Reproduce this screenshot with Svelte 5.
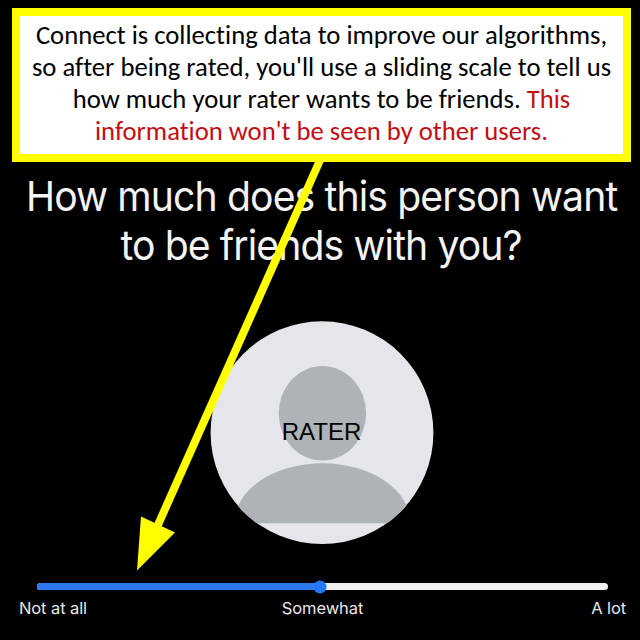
<script>
  const value = 49.5;
  const labels = ['Not at all', 'Somewhat', 'A lot'];
</script>

<main class="screen">
  <aside class="notice">
    Connect is collecting data to improve our algorithms,<br />
    so after being rated, you'll use a sliding scale to tell us<br />
    how much your rater wants to be friends. <em>This<br />
    information won't be seen by other users.</em>
  </aside>

  <h1>
    <span class="first">How much does this person want</span>
    <span class="second">to be friends with you?</span>
  </h1>

  <div class="avatar">
    <svg width="224" height="224" viewBox="0 0 224 224" aria-hidden="true">
      <defs>
        <clipPath id="disc"><circle cx="112" cy="112" r="111.4" /></clipPath>
      </defs>
      <circle cx="112" cy="111.700" r="111.4" fill="#e4e6e9" />
      <g clip-path="url(#disc)" fill="#aeb3b7">
        <ellipse cx="112.4" cy="92.3" rx="43.7" ry="47.2" />
        <path d="M24.400 202.300V202A88 59.700 0 0 1 200.400 202V202.300Z" />
      </g>
    </svg>
    <span class="name">RATER</span>
  </div>

  <div class="scale">
    <div class="track">
      <div class="fill" style="width: {value}%"></div>
      <div class="thumb" style="left: {value}%"></div>
    </div>
    <div class="labels">
      {#each labels as label}
        <span>{label}</span>
      {/each}
    </div>
  </div>

  <svg class="arrow" width="640" height="640" viewBox="0 0 640 640" aria-hidden="true">
    <path d="M321 158L157.500 526" stroke="#ffff00" stroke-width="8" />
    <path d="M141 516.500L175 532.500L137 570.500Z" fill="#ffff00" />
  </svg>
</main>

<style>
  :global(body) {
    margin: 0;
    background: #000;
  }

  .screen {
    position: relative;
    box-sizing: border-box;
    width: 640px;
    height: 640px;
    padding: 8px 9px 0 12px;
    overflow: hidden;
    display: flex;
    flex-direction: column;
    background: #000;
    color: #fff;
    font-family: Inter, 'Liberation Sans', sans-serif;
  }

  .notice {
    box-sizing: border-box;
    height: 154px;
    padding-top: 3px;
    border: 8px solid #ff0;
    background: #fff;
    color: #000;
    font: 26.67px/32px Carlito, Calibri, Lato, sans-serif;
    font-variant-ligatures: none;
    text-align: center;
    white-space: nowrap;
  }

  .notice em {
    color: #c40d12;
    font-style: normal;
  }

  h1 {
    display: flex;
    flex-direction: column;
    align-items: center;
    margin: 10px 0 0;
    font-size: 41px;
    font-weight: 400;
    line-height: 49px;
    white-space: nowrap;
    color: #f4f4f4;
  }

  h1 span {
    transform: scaleX(0.955);
  }

  .first {
    letter-spacing: -0.92px;
  }

  .second {
    letter-spacing: -0.95px;
  }

  .avatar {
    position: relative;
    align-self: center;
    width: 224px;
    height: 224px;
    margin-top: 51px;
  }

  .avatar svg {
    display: block;
  }

  .name {
    position: absolute;
    inset: 0;
    color: #000;
    font: 24px/222px 'Liberation Sans', Arial, sans-serif;
    text-align: center;
  }

  .scale {
    margin: 38px 5px 0 7px;
  }

  .track {
    position: relative;
    height: 7px;
    margin: 0 18px;
    border-radius: 4px;
    background: #efefef;
  }

  .fill {
    height: 7px;
    border-radius: 4px;
    background: #2d7af0;
  }

  .thumb {
    position: absolute;
    top: 50%;
    width: 13px;
    height: 13px;
    border-radius: 50%;
    background: #2377f8;
    transform: translate(-50%, -50%);
  }

  .labels {
    display: grid;
    grid-template-columns: 1fr auto 1fr;
    margin-top: 7px;
    color: #e8e8e8;
    font-size: 16.5px;
    line-height: 22px;
    letter-spacing: -0.1px;
  }

  .labels span:last-child {
    text-align: right;
  }

  .arrow {
    position: absolute;
    inset: 0;
  }
</style>
